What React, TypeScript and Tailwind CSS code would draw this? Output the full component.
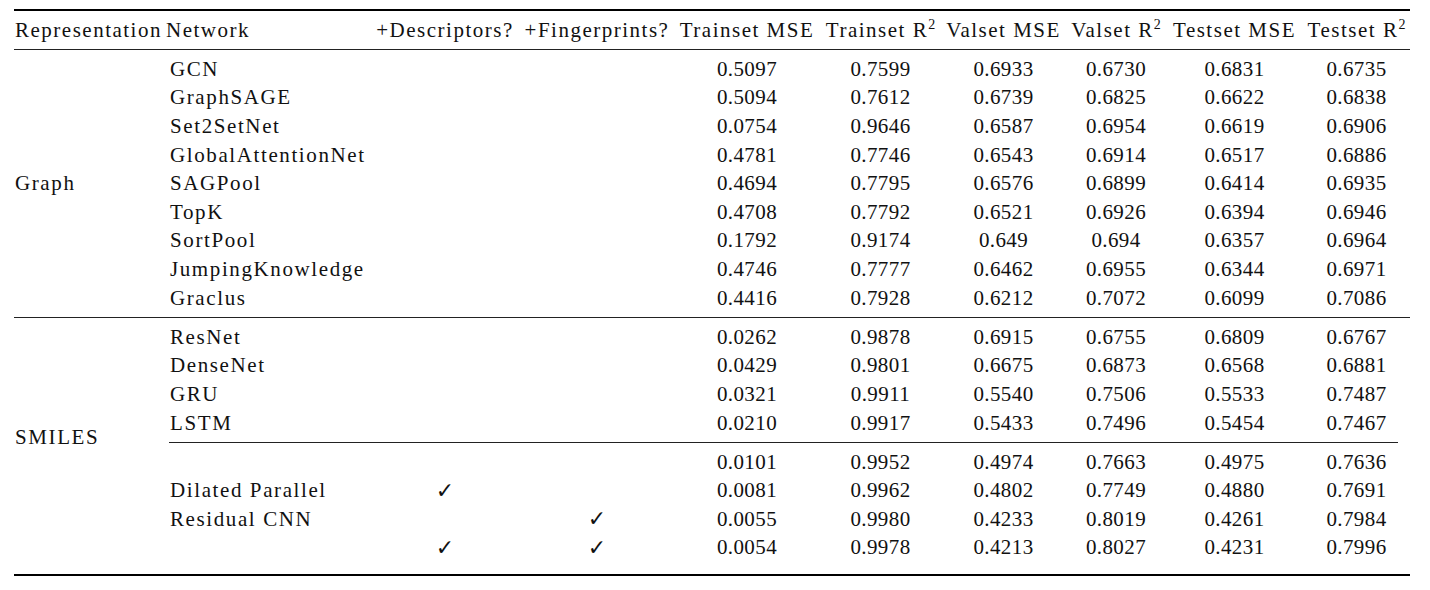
import React from "react";

const COLS = "grid grid-cols-[206px_150px_154px_146px_121px_125px_100px_137px_107px]";

type Row = { net: string; d: boolean; f: boolean; v: string[] };

const graphRows: Row[] = [
  { net: "GCN", d: false, f: false, v: ["0.5097", "0.7599", "0.6933", "0.6730", "0.6831", "0.6735"] },
  { net: "GraphSAGE", d: false, f: false, v: ["0.5094", "0.7612", "0.6739", "0.6825", "0.6622", "0.6838"] },
  { net: "Set2SetNet", d: false, f: false, v: ["0.0754", "0.9646", "0.6587", "0.6954", "0.6619", "0.6906"] },
  { net: "GlobalAttentionNet", d: false, f: false, v: ["0.4781", "0.7746", "0.6543", "0.6914", "0.6517", "0.6886"] },
  { net: "SAGPool", d: false, f: false, v: ["0.4694", "0.7795", "0.6576", "0.6899", "0.6414", "0.6935"] },
  { net: "TopK", d: false, f: false, v: ["0.4708", "0.7792", "0.6521", "0.6926", "0.6394", "0.6946"] },
  { net: "SortPool", d: false, f: false, v: ["0.1792", "0.9174", "0.649", "0.694", "0.6357", "0.6964"] },
  { net: "JumpingKnowledge", d: false, f: false, v: ["0.4746", "0.7777", "0.6462", "0.6955", "0.6344", "0.6971"] },
  { net: "Graclus", d: false, f: false, v: ["0.4416", "0.7928", "0.6212", "0.7072", "0.6099", "0.7086"] },
];

const smilesRowsA: Row[] = [
  { net: "ResNet", d: false, f: false, v: ["0.0262", "0.9878", "0.6915", "0.6755", "0.6809", "0.6767"] },
  { net: "DenseNet", d: false, f: false, v: ["0.0429", "0.9801", "0.6675", "0.6873", "0.6568", "0.6881"] },
  { net: "GRU", d: false, f: false, v: ["0.0321", "0.9911", "0.5540", "0.7506", "0.5533", "0.7487"] },
  { net: "LSTM", d: false, f: false, v: ["0.0210", "0.9917", "0.5433", "0.7496", "0.5454", "0.7467"] },
];

const smilesRowsB: Row[] = [
  { net: "", d: false, f: false, v: ["0.0101", "0.9952", "0.4974", "0.7663", "0.4975", "0.7636"] },
  { net: "Dilated Parallel", d: true, f: false, v: ["0.0081", "0.9962", "0.4802", "0.7749", "0.4880", "0.7691"] },
  { net: "Residual CNN", d: false, f: true, v: ["0.0055", "0.9980", "0.4233", "0.8019", "0.4261", "0.7984"] },
  { net: "", d: true, f: true, v: ["0.0054", "0.9978", "0.4213", "0.8027", "0.4231", "0.7996"] },
];

function Check() {
  return <span className="[font-family:'DejaVu_Sans',sans-serif] text-[22px] leading-none tracking-normal">✓</span>;
}

function DataRow({ r }: { r: Row }) {
  return (
    <div className={`${COLS} h-[28.6px] items-center`}>
      <div className="pl-[6px] tracking-[1.6px] whitespace-nowrap">{r.net}</div>
      <div className="text-center">{r.d ? <Check /> : null}</div>
      <div className="text-center">{r.f ? <Check /> : null}</div>
      {r.v.map((x, i) => (
        <div key={i} className="text-center tracking-[0.4px]">
          {x}
        </div>
      ))}
    </div>
  );
}

function R2({ label }: { label: string }) {
  return (
    <span className="whitespace-nowrap">
      {label} R<sup className="text-[14px] -top-[8px] tracking-normal">2</sup>
    </span>
  );
}

export default function App() {
  return (
    <div className="w-[1430px] h-[590px] bg-white pt-[9px] pl-[14px] [font-family:'Liberation_Serif',serif] text-[21px] leading-none text-[#111]">
      <div className="w-[1396px]">
        <div className="h-[2px] bg-black" />
        <div className="flex h-[38px] items-center whitespace-nowrap tracking-[1.5px]">
          <div className="w-[150px] pl-[1px]">Representation</div>
          <div className={`${COLS} items-center`}>
            <div className="pl-[2px]">Network</div>
            <div className="text-center">+Descriptors?</div>
            <div className="text-center">+Fingerprints?</div>
            <div className="text-center">Trainset MSE</div>
            <div className="text-center">
              <R2 label="Trainset" />
            </div>
            <div className="text-center">Valset MSE</div>
            <div className="text-center">
              <R2 label="Valset" />
            </div>
            <div className="text-center">Testset MSE</div>
            <div className="text-center">
              <R2 label="Testset" />
            </div>
          </div>
        </div>
        <div className="h-px bg-[#222]" />

        <div className="flex pt-[5px] pb-[4.6px]">
          <div className="w-[150px] pl-[1px] flex items-center tracking-[1.6px]">Graph</div>
          <div className="flex flex-col">
            {graphRows.map((r) => (
              <DataRow key={r.net} r={r} />
            ))}
          </div>
        </div>
        <div className="h-px bg-[#222]" />

        <div className="flex pt-[5px] pb-[11.6px]">
          <div className="w-[150px] pl-[1px] flex items-center pb-[11px] tracking-[1.6px]">SMILES</div>
          <div className="flex flex-col">
            {smilesRowsA.map((r) => (
              <DataRow key={r.net} r={r} />
            ))}
            <div className="pt-[4.6px] pb-[5px] pl-[5px] pr-[12px]">
              <div className="h-px bg-[#222]" />
            </div>
            {smilesRowsB.map((r, i) => (
              <DataRow key={i} r={r} />
            ))}
          </div>
        </div>
        <div className="h-[2px] bg-black" />
      </div>
    </div>
  );
}
